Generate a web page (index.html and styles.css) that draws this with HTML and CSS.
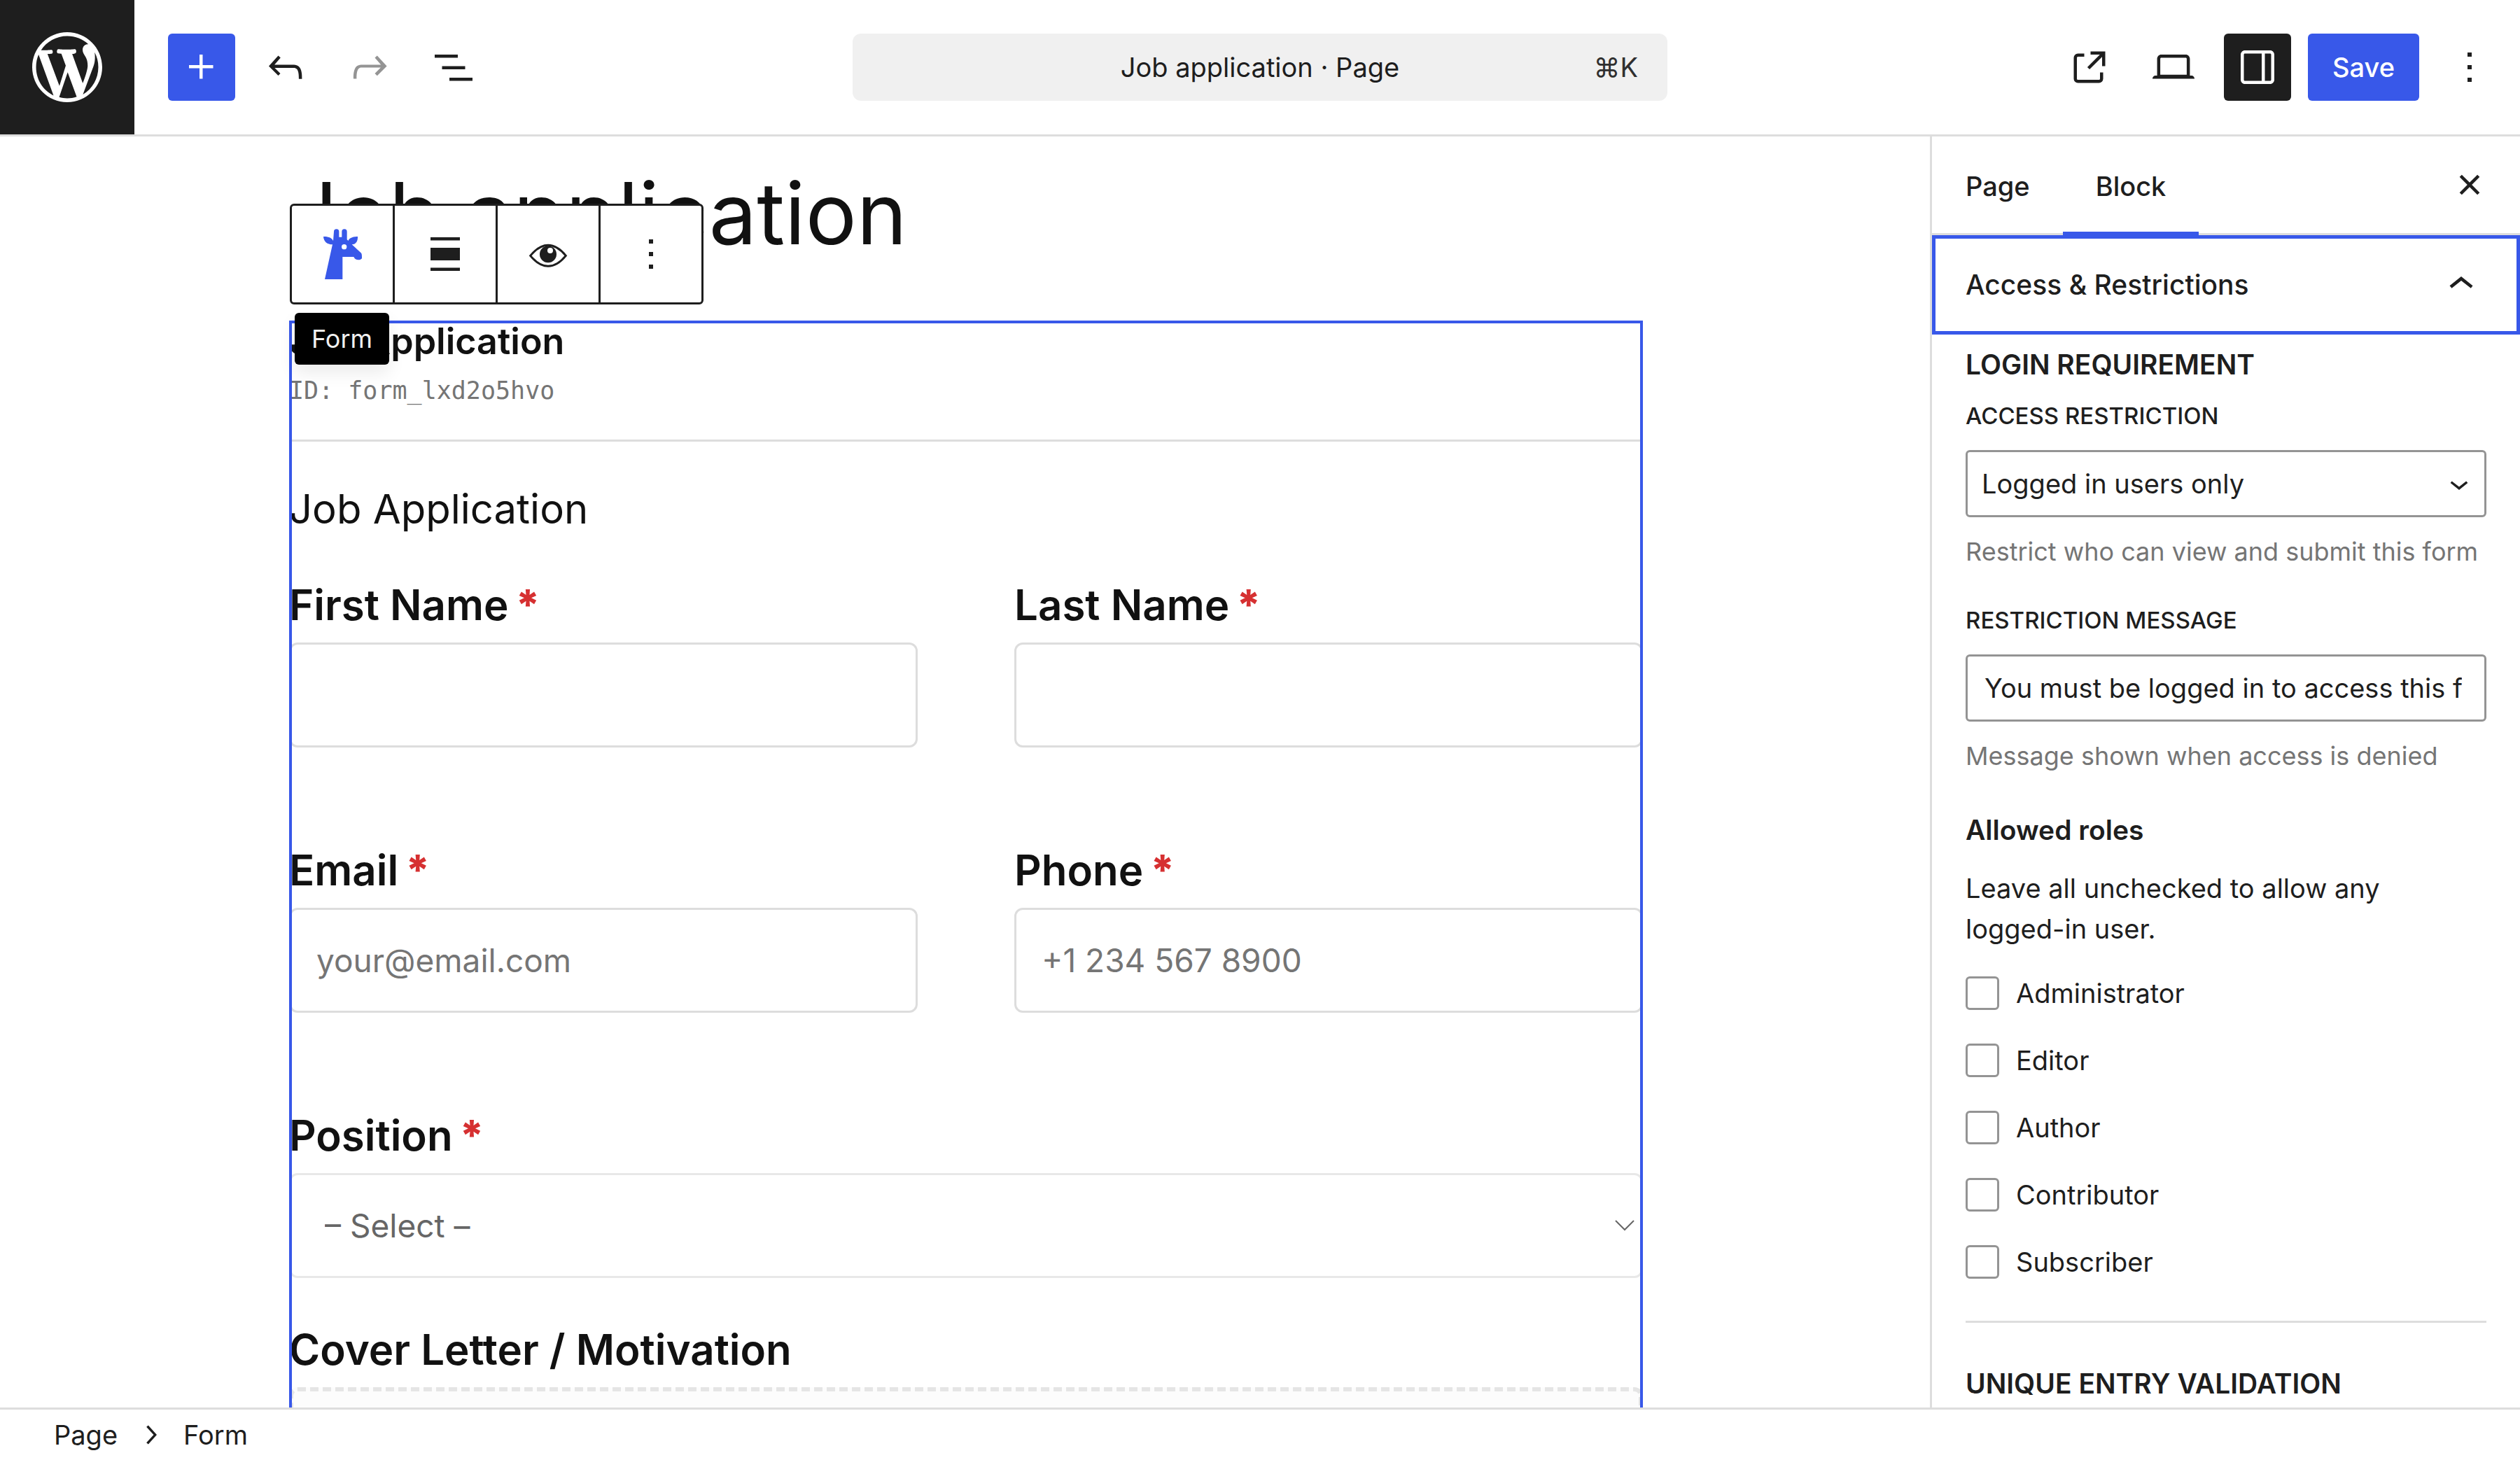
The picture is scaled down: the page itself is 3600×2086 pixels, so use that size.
FILE: index.html
```html
<!DOCTYPE html>
<html lang="en">
	<head>
		<meta charset="UTF-8">
		<title>Job application</title>
		<link rel="stylesheet" href="styles.css">
	</head>
	<body>
		<header class="topbar">
			<div class="tools">
				<a class="logo" href="#" aria-label="View pages">
					<svg viewBox="-2 -2 24 24"><path d="M20 10c0-5.51-4.49-10-10-10C4.48 0 0 4.49 0 10c0 5.52 4.48 10 10 10 5.51 0 10-4.48 10-10zM7.78 15.37L4.37 6.22c.55-.02 1.17-.08 1.17-.08.5-.06.44-1.13-.06-1.11 0 0-1.45.11-2.37.11-.18 0-.37 0-.58-.01C4.12 2.69 6.87 1.11 10 1.11c2.33 0 4.45.87 6.05 2.34-.68-.11-1.65.39-1.65 1.58 0 .74.45 1.36.9 2.1.35.61.55 1.36.55 2.46 0 1.49-1.4 5-1.4 5l-3.03-8.37c.54-.02.82-.17.82-.17.5-.05.44-1.25-.06-1.22 0 0-1.44.12-2.38.12-.87 0-2.33-.12-2.33-.12-.5-.03-.56 1.2-.06 1.22l.92.08 1.26 3.41zM17.41 10c.24-.64.74-1.87.43-4.25.7 1.29 1.05 2.71 1.05 4.25 0 3.29-1.73 6.24-4.4 7.78.97-2.59 1.94-5.2 2.92-7.78zM6.1 18.09C3.12 16.65 1.11 13.53 1.11 10c0-1.3.23-2.48.72-3.59C3.25 10.3 4.67 14.2 6.1 18.09zm4.03-6.63l2.58 6.98c-.86.29-1.76.45-2.71.45-.79 0-1.57-.11-2.29-.33.81-2.38 1.62-4.74 2.42-7.1z"/></svg>
				</a>
				<button class="btn primary" aria-label="Block inserter">
					<svg viewBox="0 0 24 24"><path d="M11 12.5V17.5H12.5V12.5H17.5V11H12.5V6H11V11H6V12.5H11Z"/></svg>
				</button>
				<button class="btn" aria-label="Undo">
					<svg viewBox="0 0 24 24"><path d="M18.3 11.7c-.6-.6-1.4-.9-2.3-.9H6.7l2.9-3.3-1.1-1-4.5 5L8.5 16l1-1-2.7-2.7H16c.5 0 .9.2 1.3.5 1 1 1 3.4 1 4.5v.3h1.5v-.2c0-1.5 0-4.3-1.5-5.7z"/></svg>
				</button>
				<button class="btn" aria-label="Redo" disabled>
					<svg viewBox="0 0 24 24"><path d="M15.6 6.5l-1.1 1 2.9 3.3H8c-.9 0-1.7.3-2.3.9-1.4 1.5-1.4 4.2-1.4 5.6v.2h1.5v-.3c0-1.1 0-3.5 1-4.5.3-.3.7-.5 1.3-.5h9.2L14.5 15l1.1 1.1 4.6-4.6-4.6-5z"/></svg>
				</button>
				<button class="btn" aria-label="Document overview">
					<svg viewBox="0 0 24 24"><path d="M3 6h11v1.5H3V6Zm3.5 5.5h11V13h-11v-1.5ZM21 17H10v1.5h11V17Z"/></svg>
				</button>
			</div>
			<button class="command">
				<span class="command-title">Job application · Page</span>
				<span class="command-key">⌘K</span>
			</button>
			<div class="settings">
				<button class="btn" aria-label="View page">
					<svg viewBox="0 0 24 24"><path d="M19.5 4.5h-7V6h4.44l-5.97 5.97 1.06 1.06L18 7.06v4.44h1.5v-7Zm-13 1a2 2 0 0 0-2 2v10a2 2 0 0 0 2 2h10a2 2 0 0 0 2-2v-3H17v3a.5.5 0 0 1-.5.5h-10a.5.5 0 0 1-.5-.5v-10a.5.5 0 0 1 .5-.5h3V5.5h-3Z"/></svg>
				</button>
				<button class="btn" aria-label="View">
					<svg viewBox="0 0 24 24"><path d="M20.5 16h-.7V8c0-1.1-.9-2-2-2H6.2c-1.1 0-2 .9-2 2v8h-.7c-.8 0-1.5.7-1.5 1.5h20c0-.8-.7-1.5-1.5-1.5zM5.7 8c0-.3.2-.5.5-.5h11.6c.3 0 .5.2.5.5v7.6H5.7V8z"/></svg>
				</button>
				<button class="btn pressed" aria-label="Settings">
					<svg viewBox="0 0 24 24"><path d="M18 4H6c-1.1 0-2 .9-2 2v12c0 1.1.9 2 2 2h12c1.1 0 2-.9 2-2V6c0-1.1-.9-2-2-2zm-4 14.5H6c-.3 0-.5-.2-.5-.5V6c0-.3.2-.5.5-.5h8v13zm4.5-.5c0 .3-.2.5-.5.5h-2.5v-13H18c.3 0 .5.2.5.5v12z"/></svg>
				</button>
				<button class="btn primary save">Save</button>
				<button class="btn" aria-label="Options">
					<svg viewBox="0 0 24 24"><path d="M13 19h-2v-2h2v2zm0-6h-2v-2h2v2zm0-6h-2V5h2v2z"/></svg>
				</button>
			</div>
		</header>

		<div class="workspace">
			<main class="canvas">
				<h1 class="post-title">Job application</h1>
				<div class="form-block">
					<div class="toolbar">
						<button aria-label="Form">
							<svg class="giraffe" viewBox="69 81 216 216">
								<path d="M141 93a11 11 0 0 1 22 0v23h12V93a11 11 0 0 1 22 0v34l6 5c2-10 16-18 40-18 1 22-10 34-25 34l39 36c4 4 4 10 4 24-5 5-10 6-15 6-10 0-16-5-20-13h-48v96h-76l33-149c-22 0-38-12-39-34 22-1 36 6 42 18z"/>
								<circle cx="185" cy="158" r="11" fill="#fff"/>
							</svg>
						</button>
						<button aria-label="Align">
							<svg viewBox="0 0 24 24"><path d="M19 5.5H5V4h14v1.5ZM19 20H5v-1.5h14V20ZM5 9h14v6H5V9Z"/></svg>
						</button>
						<button aria-label="Preview">
							<svg viewBox="951 81 216 216">
								<path d="M983 196Q1020 151 1059 151T1135 196Q1098 241 1059 241T983 196Z" fill="none" stroke="#1e1e1e" stroke-width="9"/>
								<circle cx="1059" cy="190" r="36"/>
								<circle cx="1068" cy="174" r="12" fill="#fff"/>
							</svg>
						</button>
						<button aria-label="Options">
							<svg viewBox="0 0 24 24"><path d="M13 19h-2v-2h2v2zm0-6h-2v-2h2v2zm0-6h-2V5h2v2z"/></svg>
						</button>
					</div>
					<div class="tooltip">Form</div>

					<div class="form-header">
						<div class="form-name">Job Application</div>
						<div class="form-id">ID: form_lxd2o5hvo</div>
					</div>
					<h2 class="form-heading">Job Application</h2>
					<div class="row">
						<div class="field">
							<label for="first-name">First Name<span class="required">*</span></label>
							<input type="text" id="first-name">
						</div>
						<div class="field">
							<label for="last-name">Last Name<span class="required">*</span></label>
							<input type="text" id="last-name">
						</div>
					</div>
					<div class="row">
						<div class="field">
							<label for="email">Email<span class="required">*</span></label>
							<input type="email" id="email" placeholder="your@email.com">
						</div>
						<div class="field">
							<label for="phone">Phone<span class="required">*</span></label>
							<input type="tel" id="phone" placeholder="+1 234 567 8900">
						</div>
					</div>
					<div class="field position">
						<label for="position">Position<span class="required">*</span></label>
						<div class="select-wrap">
							<select id="position">
								<option>– Select –</option>
							</select>
							<svg viewBox="0 0 28 28"><path d="M1 7l13 13 13-13" fill="none" stroke="#666" stroke-width="2"/></svg>
						</div>
					</div>
					<div class="field">
						<label for="cover">Cover Letter / Motivation</label>
						<textarea id="cover"></textarea>
					</div>
				</div>
			</main>

			<aside class="sidebar">
				<div class="tabs">
					<button class="tab">Page</button>
					<button class="tab active">Block</button>
					<button class="close" aria-label="Close Settings">
						<svg viewBox="0 0 24 24"><path d="M12 13.06l3.712 3.713 1.061-1.06L13.061 12l3.712-3.712-1.06-1.06L12 10.938 8.288 7.227l-1.061 1.06L10.939 12l-3.712 3.712 1.06 1.061L12 13.061z"/></svg>
					</button>
				</div>
				<button class="panel-toggle">
					Access &amp; Restrictions
					<svg viewBox="0 0 24 24"><path d="M6.5 12.4L12 8l5.5 4.4-.9 1.2L12 10l-4.5 3.6-1-1.2z"/></svg>
				</button>
				<div class="panel">
					<h3>LOGIN REQUIREMENT</h3>
					<div class="control">
						<label for="restriction">ACCESS RESTRICTION</label>
						<div class="select-wrap">
							<select id="restriction">
								<option>Logged in users only</option>
							</select>
							<svg viewBox="0 0 24 24"><path d="M17.5 11.6L12 16l-5.5-4.4.9-1.2L12 14l4.5-3.6 1 1.2z"/></svg>
						</div>
						<p class="help">Restrict who can view and submit this form</p>
					</div>
					<div class="control">
						<label for="message">RESTRICTION MESSAGE</label>
						<input type="text" id="message" value="You must be logged in to access this form.">
						<p class="help">Message shown when access is denied</p>
					</div>
					<div class="roles">
						<h4>Allowed roles</h4>
						<p>Leave all unchecked to allow any logged-in user.</p>
						<div class="role"><input type="checkbox" id="administrator"><label for="administrator">Administrator</label></div>
						<div class="role"><input type="checkbox" id="editor"><label for="editor">Editor</label></div>
						<div class="role"><input type="checkbox" id="author"><label for="author">Author</label></div>
						<div class="role"><input type="checkbox" id="contributor"><label for="contributor">Contributor</label></div>
						<div class="role"><input type="checkbox" id="subscriber"><label for="subscriber">Subscriber</label></div>
					</div>
					<h3 class="divided">UNIQUE ENTRY VALIDATION</h3>
				</div>
			</aside>
		</div>

		<footer class="breadcrumb">
			<a href="#">Page</a>
			<svg viewBox="0 0 24 24"><path d="M10.6 6L9.4 7l4.6 5-4.6 5 1.2 1 5.4-6z"/></svg>
			<span>Form</span>
		</footer>
	</body>
</html>
```
FILE: styles.css
```css
* {
	box-sizing: border-box;
	margin: 0;
	padding: 0;
}
body {
	display: flex;
	flex-direction: column;
	height: 100vh;
	overflow: hidden;
	background: #fff;
	color: #1e1e1e;
	font: 38px/48px Inter, sans-serif;
}
button, input, select, textarea {
	font: inherit;
	color: inherit;
	background: none;
	border: none;
}
a {
	color: inherit;
	text-decoration: none;
}
svg {
	display: block;
	flex: none;
	width: 72px;
	height: 72px;
	fill: currentColor;
}

/* top bar */
.topbar {
	display: grid;
	grid-template-columns: 1fr minmax(0, 1164px) 1fr;
	align-items: center;
	flex: none;
	border-bottom: 3px solid #ddd;
}
.tools, .settings {
	display: flex;
	align-items: center;
	gap: 24px;
}
.settings {
	justify-content: flex-end;
	padding-right: 24px;
}
.logo {
	display: flex;
	align-items: center;
	justify-content: center;
	width: 192px;
	height: 192px;
	margin-right: 24px;
	background: #1e1e1e;
	color: #fff;
}
.logo svg {
	width: 120px;
	height: 120px;
}
.btn {
	display: flex;
	align-items: center;
	justify-content: center;
	width: 96px;
	height: 96px;
	border-radius: 6px;
}
.btn:disabled {
	color: #949494;
}
.primary {
	background: #3858e9;
	color: #fff;
}
.pressed {
	background: #1e1e1e;
	color: #fff;
}
.save {
	width: auto;
	padding: 0 35px;
	font-weight: 500;
}
.command {
	position: relative;
	height: 96px;
	border-radius: 12px;
	background: #f0f0f0;
}
.command-key {
	position: absolute;
	right: 42px;
	color: #2f2f2f;
}

/* editor canvas */
.workspace {
	display: flex;
	flex: 1;
	min-height: 0;
}
.canvas {
	flex: 1;
	min-width: 0;
	overflow: hidden;
	padding-top: 38px;
	color: #111;
}
.post-title, .form-block {
	max-width: 1934px;
	margin: 0 auto;
}
.post-title {
	font-size: 122px;
	line-height: 144px;
	font-weight: 400;
}
.form-block {
	position: relative;
	margin-top: 81px;
}
.form-block::after {
	content: "";
	position: absolute;
	inset: 0;
	border: 4px solid #3858e9;
	pointer-events: none;
}
.toolbar {
	position: absolute;
	z-index: 2;
	top: -167px;
	left: 1px;
	display: flex;
	height: 144px;
	border: 3px solid #1e1e1e;
	border-radius: 6px;
	background: #fff;
	color: #1e1e1e;
}
.toolbar button {
	display: flex;
	align-items: center;
	justify-content: center;
	width: 144px;
}
.toolbar button + button {
	width: 147px;
	border-left: 3px solid #1e1e1e;
}
.giraffe {
	color: #3858e9;
}
.tooltip {
	position: absolute;
	z-index: 2;
	top: -11px;
	left: 8px;
	padding: 13px 24px;
	border-radius: 6px;
	background: #000;
	color: #f0f0f0;
	font-size: 36px;
	box-shadow: 0 12px 24px rgba(0, 0, 0, .08);
}
.form-header {
	display: flex;
	flex-direction: column;
	gap: 16px;
	padding-bottom: 46px;
	border-bottom: 3px solid #ddd;
}
.form-name {
	font-size: 52px;
	line-height: 60px;
	font-weight: 600;
}
.form-id {
	font-family: "DejaVu Sans Mono", monospace;
	font-size: 35px;
	color: #757575;
}
.form-heading {
	margin: 60px 0 66px;
	font-size: 58px;
	line-height: 72px;
	font-weight: 400;
}
.row {
	display: grid;
	grid-template-columns: 1fr 1fr;
	gap: 138px;
	margin-bottom: 140px;
}
.field {
	display: flex;
	flex-direction: column;
	gap: 18px;
}
.row, .position {
	margin-top: -1px;
}
.field label {
	font-size: 60px;
	line-height: 72px;
	font-weight: 600;
}
.required {
	margin-left: 10px;
	color: #d63031;
	font-weight: 800;
}
.field input, .field select {
	width: 100%;
	height: 150px;
	padding: 0 36px;
	border: 3px solid #ddd;
	border-radius: 12px;
	font-size: 46px;
}
.field input::placeholder {
	color: #757575;
}
.field select {
	padding: 0 48px;
	border-color: #e8e8e8;
	color: #666;
}
.field .select-wrap svg {
	right: 12px;
	width: 28px;
	height: 28px;
}
.position {
	margin-bottom: 66px;
}
.field textarea {
	height: 300px;
	border: 6px dashed #e5e5e5;
	border-radius: 12px;
	background: #fcfcfc;
	resize: none;
}
.select-wrap {
	position: relative;
	display: flex;
	align-items: center;
}
.select-wrap select {
	appearance: none;
	width: 100%;
}
.select-wrap svg {
	position: absolute;
	pointer-events: none;
}

/* settings sidebar */
.sidebar {
	flex: none;
	width: 840px;
	overflow: hidden;
	box-shadow: -3px 0 #ddd;
}
.tabs {
	display: flex;
	height: 141px;
	padding-right: 24px;
	border-bottom: 3px solid #ddd;
}
.tab {
	height: 141px;
	padding: 0 47px;
	font-weight: 500;
}
.tab:first-child {
	padding-left: 48px;
}
.active {
	box-shadow: inset 0 -5px #3858e9;
}
.close {
	display: flex;
	align-items: center;
	justify-content: center;
	width: 96px;
	margin-left: auto;
}
.panel-toggle {
	display: flex;
	align-items: center;
	justify-content: space-between;
	width: 100%;
	height: 142px;
	padding: 0 43px;
	border: 5px solid #3858e9;
	font-size: 39px;
	font-weight: 500;
}
.panel {
	padding: 19px 48px;
}
.panel h3, .panel h4 {
	font-size: 39px;
	font-weight: 600;
}
.control {
	display: flex;
	flex-direction: column;
	gap: 25px;
	margin: 25px 0 50px;
}
.control + .control {
	margin-top: 50px;
}
.control label {
	font-size: 33px;
	font-weight: 500;
}
.control input, .control select {
	width: 100%;
	height: 96px;
	padding: 0 32px 0 24px;
	border: 3px solid #949494;
	border-radius: 6px;
}
.control select {
	padding-left: 20px;
}
.control .select-wrap svg {
	right: 12px;
	width: 54px;
	height: 54px;
}
.help {
	font-size: 36px;
	color: #757575;
}
.roles {
	display: flex;
	flex-direction: column;
	gap: 48px;
	margin: 58px 0 60px;
}
.roles p {
	margin: -18px 0 -9px;
	padding-right: 48px;
	line-height: 58px;
}
.role {
	display: flex;
	align-items: center;
	gap: 24px;
}
.role input {
	appearance: none;
	width: 48px;
	height: 48px;
	border: 3px solid #949494;
	border-radius: 6px;
}
.divided {
	padding-top: 63px;
	border-top: 3px solid #ddd;
}

/* footer */
.breadcrumb {
	display: flex;
	align-items: center;
	gap: 20px;
	flex: none;
	height: 75px;
	padding: 0 77px;
	border-top: 3px solid #ddd;
}
.breadcrumb svg {
	width: 54px;
	height: 54px;
}
```
